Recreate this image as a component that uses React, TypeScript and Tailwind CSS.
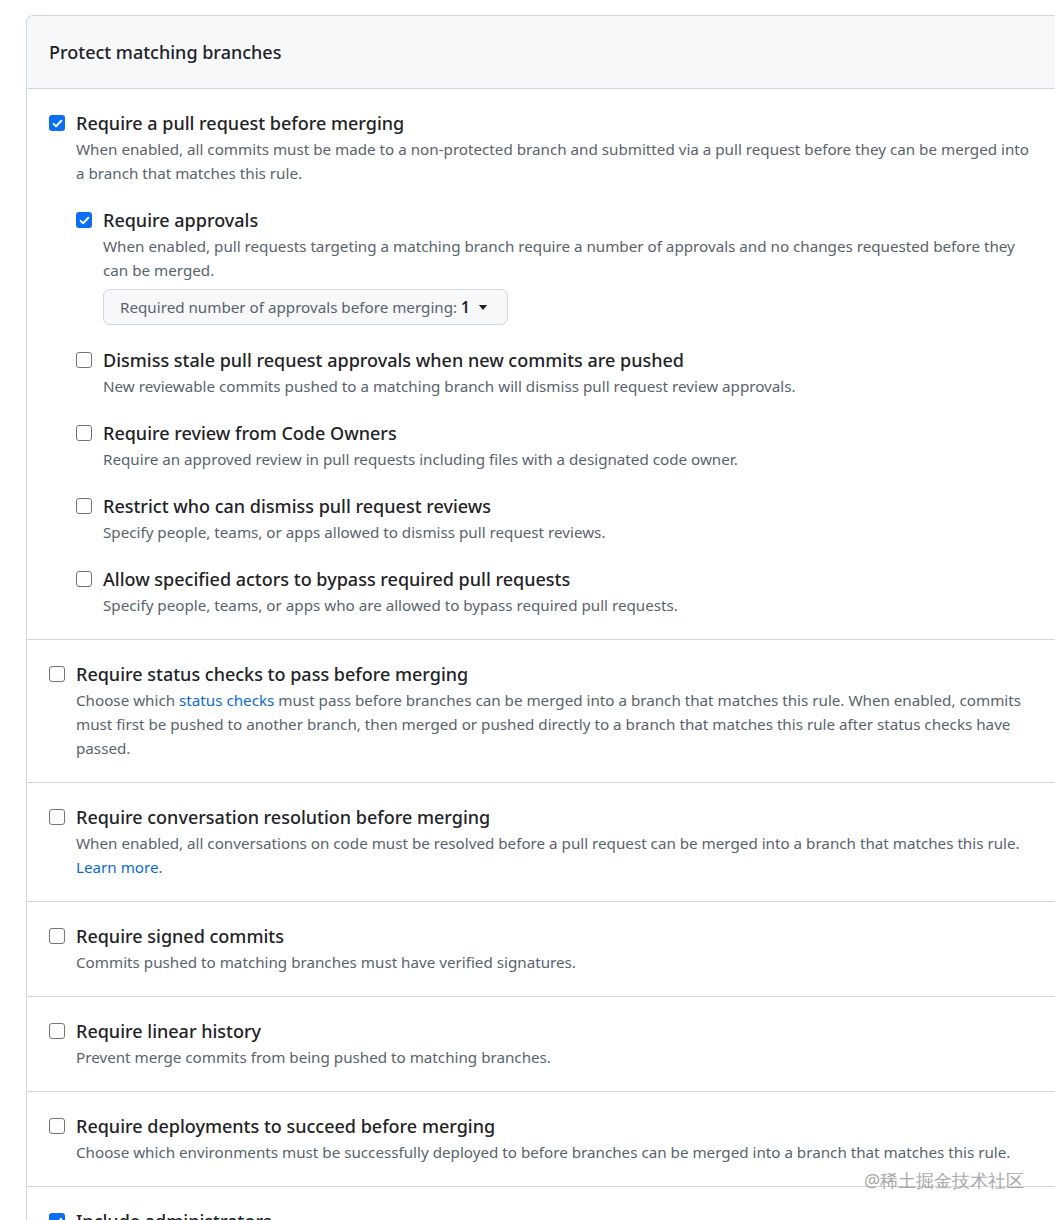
import React from "react";

type Rule = {
  title: string;
  checked?: boolean;
  desc: React.ReactNode;
};

const Check: React.FC<{ checked?: boolean }> = ({ checked }) =>
  checked ? (
    <span className="mt-1 flex h-4 w-4 shrink-0 items-center justify-center rounded-[3px] bg-[#0b6ff5]">
      <svg viewBox="0 0 16 16" className="h-[13px] w-[13px]">
        <path
          d="M3.2 8.4l3.1 3 6.4-6.8"
          stroke="white"
          strokeWidth="2.3"
          fill="none"
          strokeLinecap="round"
          strokeLinejoin="round"
        />
      </svg>
    </span>
  ) : (
    <span className="mt-1 h-4 w-4 shrink-0 rounded-[3px] border-[1.5px] border-[#767676] bg-white" />
  );

const RuleRow: React.FC<Rule & { children?: React.ReactNode }> = ({ title, checked, desc, children }) => (
  <div className="flex gap-[11px]">
    <Check checked={checked} />
    <div className="min-w-0 flex-1">
      <div className="text-[18px] font-medium leading-6 text-[#1f2328]">{title}</div>
      <p className="mt-0.5 text-[15.2px] leading-6 text-[#59636e]">{desc}</p>
      {children}
    </div>
  </div>
);

const nested: Rule[] = [
  {
    title: "Dismiss stale pull request approvals when new commits are pushed",
    desc: "New reviewable commits pushed to a matching branch will dismiss pull request review approvals.",
  },
  {
    title: "Require review from Code Owners",
    desc: "Require an approved review in pull requests including files with a designated code owner.",
  },
  {
    title: "Restrict who can dismiss pull request reviews",
    desc: "Specify people, teams, or apps allowed to dismiss pull request reviews.",
  },
  {
    title: "Allow specified actors to bypass required pull requests",
    desc: "Specify people, teams, or apps who are allowed to bypass required pull requests.",
  },
];

const sections: Rule[] = [
  {
    title: "Require status checks to pass before merging",
    desc: (
      <>
        Choose which <a className="text-[#0969da]">status checks</a> must pass before branches can be merged into a
        branch that matches this rule. When enabled, commits must first be pushed to another branch, then merged or
        pushed directly to a branch that matches this rule after status checks have passed.
      </>
    ),
  },
  {
    title: "Require conversation resolution before merging",
    desc: (
      <>
        When enabled, all conversations on code must be resolved before a pull request can be merged into a branch
        that matches this rule. <a className="text-[#0969da]">Learn more</a>.
      </>
    ),
  },
  {
    title: "Require signed commits",
    desc: "Commits pushed to matching branches must have verified signatures.",
  },
  {
    title: "Require linear history",
    desc: "Prevent merge commits from being pushed to matching branches.",
  },
  {
    title: "Require deployments to succeed before merging",
    desc: "Choose which environments must be successfully deployed to before branches can be merged into a branch that matches this rule.",
  },
  {
    title: "Include administrators",
    checked: true,
    desc: "Enforce all configured restrictions above for administrators.",
  },
];

export default function App() {
  return (
    <div
      className="relative w-full overflow-x-hidden bg-white pl-[26px] pt-[15px]"
      style={{ fontFamily: '"Noto Sans", "Open Sans", sans-serif' }}
    >
      <div className="w-[1035px] rounded-tl-[7px] border-l border-t border-[#d0d7de]">
        <div className="flex h-[73px] items-center rounded-tl-[7px] border-b border-[#d0d7de] bg-[#f6f8fa] px-[22px]">
          <h2 className="text-[18px] font-medium text-[#1f2328]">Protect matching branches</h2>
        </div>

        <div className="border-b border-[#d0d7de] pb-[22px] pl-[22px] pr-5 pt-[22px]">
          <RuleRow
            checked
            title="Require a pull request before merging"
            desc="When enabled, all commits must be made to a non-protected branch and submitted via a pull request before they can be merged into a branch that matches this rule."
          >
            <div className="mt-[23px] flex flex-col gap-[23px]">
              <RuleRow
                checked
                title="Require approvals"
                desc="When enabled, pull requests targeting a matching branch require a number of approvals and no changes requested before they can be merged."
              >
                <button className="mt-[7px] flex h-9 items-center gap-2 whitespace-nowrap rounded-[7px] border border-[#d0d7de] bg-[#f6f8fa] pl-4 pr-[19px] text-[15.2px] text-[#59636e]">
                  <span>
                    Required number of approvals before merging:{" "}
                    <span className="font-semibold text-[#1f2328]">1</span>
                  </span>
                  <svg viewBox="0 0 10 6" className="h-[5px] w-[10px]">
                    <path d="M0 0h10L5 6z" fill="#1f2328" />
                  </svg>
                </button>
              </RuleRow>
              {nested.map((r) => (
                <RuleRow key={r.title} {...r} />
              ))}
            </div>
          </RuleRow>
        </div>

        {sections.map((s) => (
          <div key={s.title} className="border-b border-[#d0d7de] pb-[22px] pl-[22px] pr-5 pt-[22px]">
            <RuleRow {...s} />
          </div>
        ))}
      </div>

      <div className="pointer-events-none absolute left-[864px] top-[1166px] text-[18px] leading-7 text-[#a0a0a0] opacity-90">
        @稀土掘金技术社区
      </div>
    </div>
  );
}
